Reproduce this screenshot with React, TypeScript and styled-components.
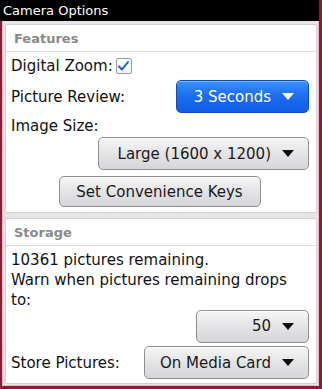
import React from 'react';
import styled, { createGlobalStyle } from 'styled-components';

const GlobalStyle = createGlobalStyle`
    html, body {
        margin: 0;
        padding: 0;
        background: #ffffff;
    }
    * {
        box-sizing: border-box;
    }
`;

interface ChoiceProps {
    label: string;
    width: number;
    primary?: boolean;
}

const Arrow: React.FC<{ color: string }> = ({ color }) => (
    <svg width="12" height="7" viewBox="0 0 12 7">
        <polygon points="0,0 12,0 6,7" fill={color} />
    </svg>
);

const Choice: React.FC<ChoiceProps> = ({ label, width, primary }) => (
    <ChoiceButton $primary={primary} style={{ width }}>
        <span>{label}</span>
        <Arrow color={primary ? '#ffffff' : '#111111'} />
    </ChoiceButton>
);

const Check: React.FC = () => (
    <CheckBox>
        <svg width="13" height="12" viewBox="0 0 13 12">
            <path d="M2 6.5 L5 9.5 L11 2" fill="none" stroke="#1f5fc8" strokeWidth="2" strokeLinecap="round" strokeLinejoin="round" />
        </svg>
    </CheckBox>
);

const App: React.FC = () => {
    return (
        <>
            <GlobalStyle />
            <Screen>
                <TitleBar>Camera Options</TitleBar>
                <Body>
                    <Panel>
                        <PanelHeader>Features</PanelHeader>
                        <Row $height={27}>
                            <Label>Digital Zoom:</Label>
                            <Check />
                        </Row>
                        <Row $height={35} $between>
                            <Label>Picture Review:</Label>
                            <Choice label="3 Seconds" width={133} primary />
                        </Row>
                        <Row $height={23}>
                            <Label>Image Size:</Label>
                        </Row>
                        <Row $height={33} $end>
                            <Choice label="Large (1600 x 1200)" width={211} />
                        </Row>
                        <Row $height={38} $center $pad={5}>
                            <PlainButton>Set Convenience Keys</PlainButton>
                        </Row>
                    </Panel>
                    <Panel>
                        <PanelHeader>Storage</PanelHeader>
                        <TextBlock>
                            <Label>10361 pictures remaining.</Label>
                            <Label>Warn when pictures remaining drops to:</Label>
                        </TextBlock>
                        <Row $height={32} $end>
                            <Choice label="50" width={113} />
                        </Row>
                        <Row $height={37} $between $pad={4}>
                            <Label>Store Pictures:</Label>
                            <Choice label="On Media Card" width={165} />
                        </Row>
                    </Panel>
                </Body>
            </Screen>
        </>
    );
};

export default App;

const Screen = styled.div`
    width: 322px;
    height: 389px;
    display: flex;
    flex-direction: column;
    background: #e7e5e7;
    border-right: 3px solid #8d1b35;
    border-bottom: 3px solid #8d1b35;
    font-family: "DejaVu Sans", "Liberation Sans", sans-serif;
    overflow: hidden;
`;

const TitleBar = styled.div`
    height: 21px;
    flex: 0 0 21px;
    background: #000000;
    color: #ffffff;
    font-size: 13px;
    line-height: 22px;
    padding-left: 3px;
    white-space: nowrap;
`;

const Body = styled.div`
    flex: 1;
    display: flex;
    flex-direction: column;
    gap: 5px;
    padding: 3px 2px 2px 3px;
    border-left: 2px solid #8d1b35;
    box-shadow: inset 1px 0 0 #e3b9c3, inset -1px 0 0 #e3b9c3, inset 0 -1px 0 #e3b9c3;
`;

const Panel = styled.div`
    display: flex;
    flex-direction: column;
    background: #ffffff;
    border: 1px solid #d3d1d3;
    border-radius: 2px;
    padding: 0 7px 4px 4px;

    &:last-child {
        flex: 1;
    }
`;

const PanelHeader = styled.div`
    height: 27px;
    flex: 0 0 27px;
    margin: 0 -7px 0 -4px;
    padding: 0 0 0 8px;
    border-bottom: 1px solid #dedcde;
    color: #8a8a8a;
    font-size: 13px;
    font-weight: bold;
    line-height: 28px;
`;

const Row = styled.div<{ $height: number; $pad?: number; $between?: boolean; $end?: boolean; $center?: boolean }>`
    height: ${(p) => p.$height}px;
    flex: 0 0 ${(p) => p.$height}px;
    padding-top: ${(p) => p.$pad ?? 0}px;
    display: flex;
    align-items: center;
    justify-content: ${(p) => (p.$between ? 'space-between' : p.$end ? 'flex-end' : p.$center ? 'center' : 'flex-start')};
    gap: 3px;
`;

const Label = styled.span`
    color: #111111;
    font-size: 15px;
    line-height: 20px;
    padding-left: 1px;
`;

const TextBlock = styled.div`
    display: flex;
    flex-direction: column;
    padding: 4px 0 0;
    flex: 0 0 auto;
`;

const CheckBox = styled.span`
    width: 16px;
    height: 16px;
    display: inline-flex;
    align-items: center;
    justify-content: center;
    border: 1px solid #9c9c9c;
    border-radius: 2px;
    background: linear-gradient(#ffffff, #eef0f4);
`;

const ChoiceButton = styled.div<{ $primary?: boolean }>`
    height: 33px;
    display: flex;
    align-items: center;
    justify-content: flex-end;
    gap: 11px;
    padding-right: 14px;
    border-radius: 5px;
    font-size: 15px;
    white-space: nowrap;
    color: ${(p) => (p.$primary ? '#ffffff' : '#1a1a1a')};
    border: 1px solid ${(p) => (p.$primary ? '#0d4fb8' : '#8e8e8e')};
    background: ${(p) =>
        p.$primary
            ? 'linear-gradient(#3792fb, #1b6cf0 50%, #0f5fe6)'
            : 'linear-gradient(#f6f6f6, #e4e3e6 50%, #d6d5d9)'};
    box-shadow: inset 0 1px 0 ${(p) => (p.$primary ? 'rgba(255,255,255,0.35)' : '#ffffff')};
`;

const PlainButton = styled.div`
    width: 202px;
    height: 31px;
    display: flex;
    align-items: center;
    justify-content: center;
    border-radius: 5px;
    font-size: 15px;
    color: #1a1a1a;
    border: 1px solid #8e8e8e;
    background: linear-gradient(#f6f6f6, #e4e3e6 50%, #d6d5d9);
    box-shadow: inset 0 1px 0 #ffffff;
`;
